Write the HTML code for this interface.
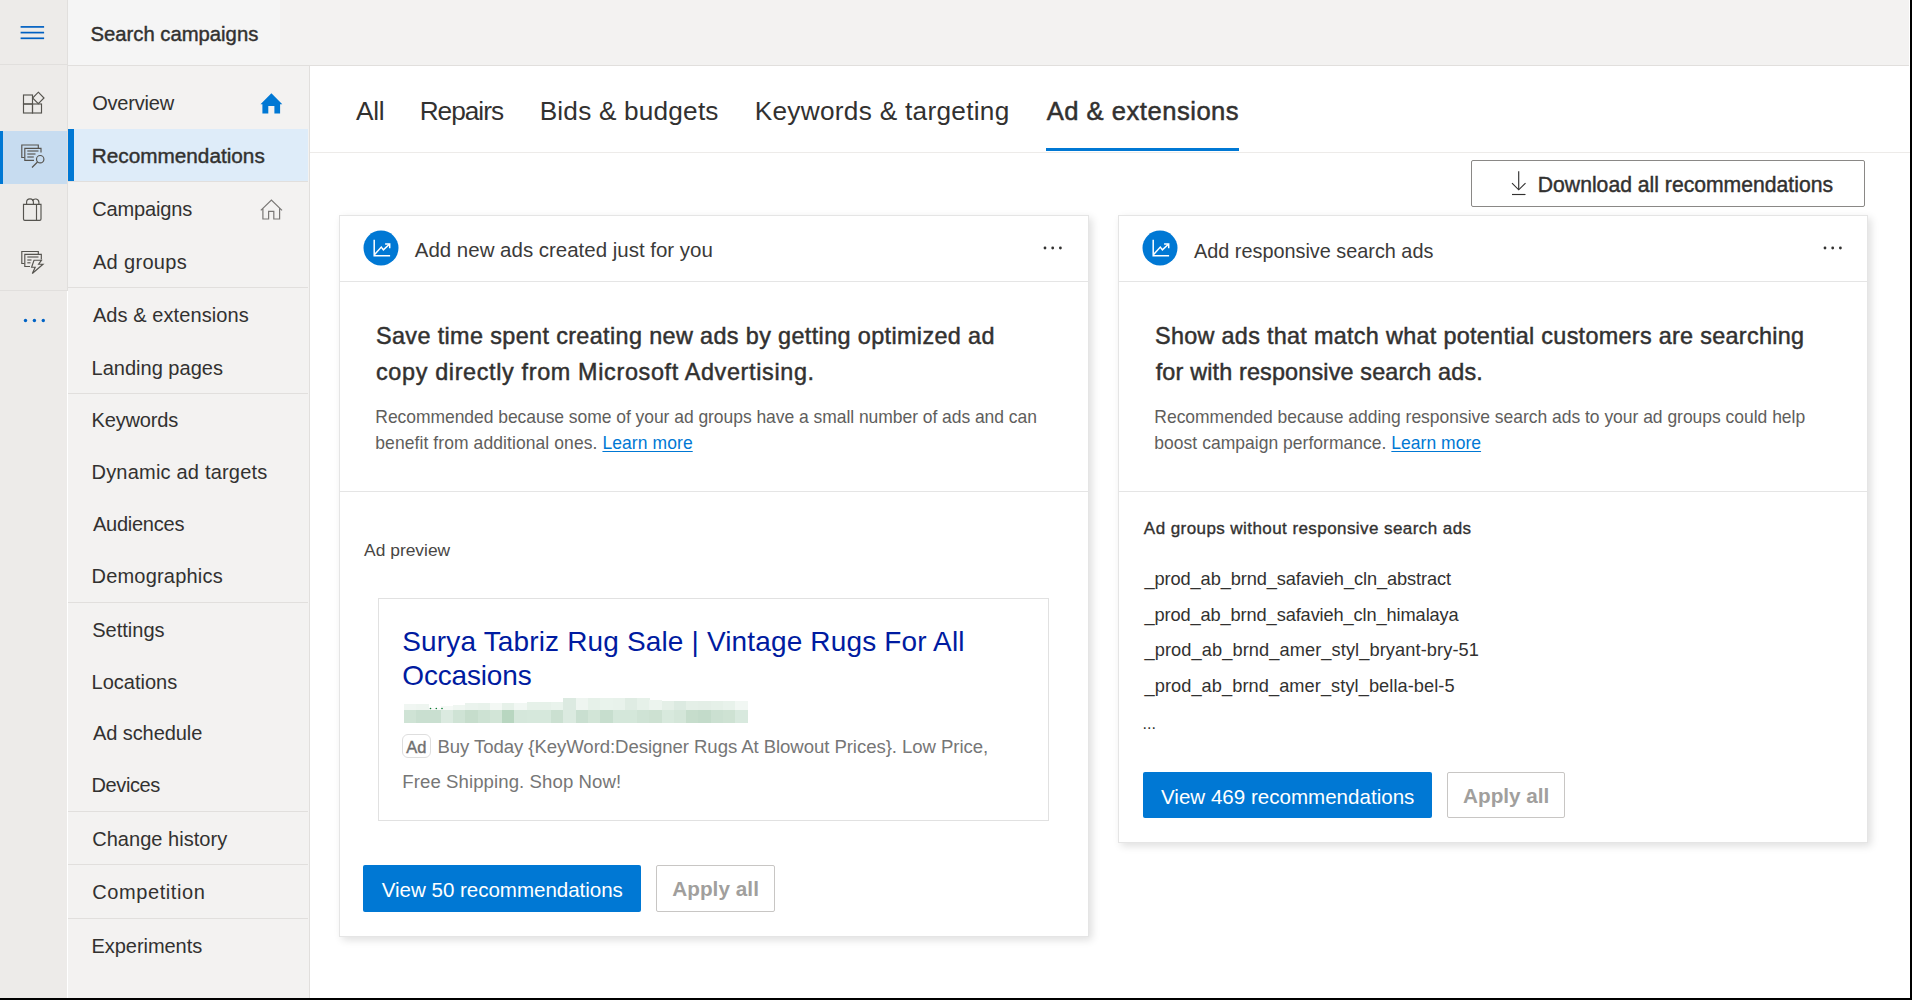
<!DOCTYPE html>
<html><head><meta charset="utf-8"><title>Search campaigns - Recommendations</title>
<style>
html,body{margin:0;padding:0;width:1912px;height:1000px;overflow:hidden;background:#fff;font-family:"Liberation Sans",sans-serif;}
.t{position:absolute;white-space:pre;}
</style></head><body>
<div style="position:absolute;left:0px;top:0px;width:67px;height:1000px;background:#edebe9;"></div>
<div style="position:absolute;left:67px;top:0px;width:1px;height:291px;background:#e1dfdd;"></div>
<div style="position:absolute;left:0px;top:64px;width:67px;height:1px;background:#e1dfdd;"></div>
<div style="position:absolute;left:0px;top:290px;width:67px;height:1px;background:#e1dfdd;"></div>
<div style="position:absolute;left:0px;top:131px;width:67px;height:53px;background:#c7dcf0;"></div>
<div style="position:absolute;left:0px;top:131px;width:3px;height:53px;background:#0078d4;"></div>
<svg style="position:absolute;left:0;top:0" width="68" height="340" viewBox="0 0 68 340">
<g fill="none" stroke="#0060c2" stroke-width="1.7">
<line x1="20.6" y1="26.9" x2="44.1" y2="26.9"/><line x1="20.6" y1="32.6" x2="44.1" y2="32.6"/><line x1="20.6" y1="38.3" x2="44.1" y2="38.3"/>
</g>
<g fill="none" stroke="#56544f" stroke-width="1.15">
<rect x="23.5" y="95" width="9" height="9"/>
<rect x="23.5" y="104" width="9" height="9"/>
<rect x="32.5" y="104" width="9" height="9"/>
<path d="M38.3 92.2 L44 98 L38.3 103.7 L32.6 98 Z"/>
</g>
<g fill="none" stroke="#56544f" stroke-width="1.15">
<path d="M24.5 157.5 L21.8 157.5 L21.8 145 L38.3 145 L38.3 148.3"/>
<path d="M34 160.3 L24.8 160.3 L24.8 148.3 L41 148.3 L41 152.5"/>
<line x1="27.3" y1="151" x2="38.5" y2="151"/>
<line x1="27.3" y1="154" x2="35.5" y2="154"/>
<line x1="27.3" y1="157" x2="33.8" y2="157"/>
<circle cx="40.2" cy="159.2" r="3.7"/>
<line x1="37.5" y1="162" x2="32" y2="167.5"/>
</g>
<g fill="none" stroke="#56544f" stroke-width="1.15">
<path d="M23.5 204.3 L41 204.3 L41 219 Q41 220.3 39.7 220.3 L24.8 220.3 Q23.5 220.3 23.5 219 Z"/>
<line x1="36.5" y1="204.3" x2="36.5" y2="220.3"/>
<path d="M26.6 204.3 L26.6 202.3 A3.4 3.4 0 0 1 33.4 202.3 L33.4 204.3"/>
<path d="M32.4 201 A3.4 3.4 0 0 1 38.9 202.3 L38.9 204.3"/>
</g>
<g fill="none" stroke="#56544f" stroke-width="1.15">
<path d="M24.5 263.5 L21.8 263.5 L21.8 251.5 L38.3 251.5 L38.3 254.3"/>
<path d="M30 266.5 L24.8 266.5 L24.8 254.3 L41.3 254.3 L41.3 259.5"/>
<line x1="27.3" y1="257" x2="38.5" y2="257"/>
<line x1="27.3" y1="260" x2="31.5" y2="260"/>
<line x1="27.3" y1="262.8" x2="30.5" y2="262.8"/>
<path d="M34 260.2 L41.5 260.2 L38.6 264.2 L43 264.2 L32.3 273.5 L35.2 267.2 L31.6 267.2 Z"/>
</g>
<g fill="#0063c5"><circle cx="25.5" cy="320.5" r="1.7"/><circle cx="34.4" cy="320.5" r="1.7"/><circle cx="43.3" cy="320.5" r="1.7"/></g>
</svg>
<div style="position:absolute;left:68px;top:0px;width:1841px;height:65px;background:#f3f2f1;"></div>
<div style="position:absolute;left:68px;top:0px;width:212px;height:65px;background:#f5f5f5;"></div>
<div style="position:absolute;left:68px;top:65px;width:1841px;height:1px;background:#e1dfdd;"></div>
<div style="position:absolute;left:68px;top:66px;width:241px;height:934px;background:#f3f2f1;"></div>
<div style="position:absolute;left:309px;top:66px;width:1px;height:934px;background:#e1dfdd;"></div>
<div style="position:absolute;left:68px;top:129px;width:240px;height:52px;background:#deecf9;"></div>
<div style="position:absolute;left:68px;top:129px;width:6px;height:52px;background:#0078d4;"></div>
<div style="position:absolute;left:68px;top:181px;width:240px;height:1px;background:#e1dfdd;"></div>
<div style="position:absolute;left:68px;top:287px;width:240px;height:1px;background:#e1dfdd;"></div>
<div style="position:absolute;left:68px;top:393px;width:240px;height:1px;background:#e1dfdd;"></div>
<div style="position:absolute;left:68px;top:602px;width:240px;height:1px;background:#e1dfdd;"></div>
<div style="position:absolute;left:68px;top:811px;width:240px;height:1px;background:#e1dfdd;"></div>
<div style="position:absolute;left:68px;top:864px;width:240px;height:1px;background:#e1dfdd;"></div>
<div style="position:absolute;left:68px;top:918px;width:240px;height:1px;background:#e1dfdd;"></div>
<svg style="position:absolute;left:255px;top:88px" width="32" height="135" viewBox="255 88 32 135">
<path fill="#0078d4" d="M271.4 93.2 L282.3 104.3 L280.1 104.3 L280.1 113.5 L274.4 113.5 L274.4 105.9 L268.3 105.9 L268.3 113.5 L262.4 113.5 L262.4 104.3 L260.5 104.3 Z"/>
<path fill="none" stroke="#797775" stroke-width="1.2" d="M260.8 210.4 L271.4 200 L282 210.4 M262.9 208.6 L262.9 219 L268.6 219 L268.6 211.4 L273.8 211.4 L273.8 219 L279.6 219 L279.6 208.6"/>
</svg>
<div style="position:absolute;left:310px;top:66px;width:1600px;height:932px;background:#fff;"></div>
<div style="position:absolute;left:310px;top:152px;width:1600px;height:1px;background:#edebe9;"></div>
<div style="position:absolute;left:1046px;top:148px;width:193px;height:3px;background:#0078d4;"></div>
<div style="position:absolute;left:1471px;top:160px;width:392px;height:45px;border:1px solid #8a8886;border-radius:2px;background:#fff"></div>
<svg style="position:absolute;left:1508px;top:168px" width="22" height="30" viewBox="1508 168 22 30">
<g fill="none" stroke="#323130" stroke-width="1.15"><line x1="1518.7" y1="171.3" x2="1518.7" y2="189.5"/><path d="M1512 183.2 L1518.7 189.8 L1525.5 183.2"/><line x1="1512" y1="194.5" x2="1525.5" y2="194.5"/></g></svg>
<div style="position:absolute;left:339px;top:215px;width:750px;height:722px;background:#fff;border:1px solid #e5e5e5;box-sizing:border-box;box-shadow:3px 3px 8px rgba(0,0,0,0.13)"></div>
<div style="position:absolute;left:340px;top:281px;width:748px;height:1px;background:#e5e5e5;"></div>
<div style="position:absolute;left:340px;top:491px;width:748px;height:1px;background:#e5e5e5;"></div>
<svg style="position:absolute;left:363px;top:230.2px" width="36" height="36" viewBox="-18 -18 36 36">
<circle cx="0" cy="0" r="17.5" fill="#0078d4"/>
<g fill="none" stroke="#fff" stroke-width="1.5"><path d="M-6.8 -8.3 L-6.8 7.7 L9.1 7.7"/><path d="M-6.4 6.6 L0.3 -0.9 L2.4 1.9 L8.4 -3.8"/><path d="M4.1 -3.9 L8.7 -3.9 L8.7 0.2"/></g></svg>
<svg style="position:absolute;left:1041.2px;top:244.4px" width="24" height="8" viewBox="1041.2 244.4 24 8"><g fill="#323130"><circle cx="1045.2" cy="248.4" r="1.4"/><circle cx="1052.9" cy="248.4" r="1.4"/><circle cx="1060.6000000000001" cy="248.4" r="1.4"/></g></svg>
<div style="position:absolute;left:378px;top:598px;width:671px;height:223px;border:1px solid #e1e1e1;box-sizing:border-box"></div>
<div style="position:absolute;left:404.00px;top:710.4px;width:12.57px;height:12.2px;background:#cfe3d5"></div><div style="position:absolute;left:404.00px;top:703.5px;width:12.57px;height:6.90px;background:#f0f6f2"></div><div style="position:absolute;left:416.27px;top:710.4px;width:12.57px;height:12.2px;background:#c9dfd0"></div><div style="position:absolute;left:416.27px;top:704px;width:12.57px;height:6.40px;background:#eef5f0"></div><div style="position:absolute;left:428.54px;top:710.4px;width:12.57px;height:12.2px;background:#c9dfd0"></div><div style="position:absolute;left:428.54px;top:708px;width:12.57px;height:2.40px;background:#f7faf8"></div><div style="position:absolute;left:440.80px;top:710.4px;width:12.57px;height:12.2px;background:#dbeae0"></div><div style="position:absolute;left:440.80px;top:706px;width:12.57px;height:4.40px;background:#f5f9f6"></div><div style="position:absolute;left:453.07px;top:710.4px;width:12.57px;height:12.2px;background:#cfe3d5"></div><div style="position:absolute;left:453.07px;top:705px;width:12.57px;height:5.40px;background:#eff6f1"></div><div style="position:absolute;left:465.34px;top:710.4px;width:12.57px;height:12.2px;background:#c6ddcc"></div><div style="position:absolute;left:465.34px;top:703px;width:12.57px;height:7.40px;background:#eaf3ed"></div><div style="position:absolute;left:477.61px;top:710.4px;width:12.57px;height:12.2px;background:#cde2d3"></div><div style="position:absolute;left:477.61px;top:703px;width:12.57px;height:7.40px;background:#e8f2eb"></div><div style="position:absolute;left:489.88px;top:710.4px;width:12.57px;height:12.2px;background:#d2e5d7"></div><div style="position:absolute;left:489.88px;top:703px;width:12.57px;height:7.40px;background:#f3f8f4"></div><div style="position:absolute;left:502.14px;top:710.4px;width:12.57px;height:12.2px;background:#b8d6c0"></div><div style="position:absolute;left:502.14px;top:703px;width:12.57px;height:7.40px;background:#e6f1e9"></div><div style="position:absolute;left:514.41px;top:710.4px;width:12.57px;height:12.2px;background:#d5e7db"></div><div style="position:absolute;left:514.41px;top:703px;width:12.57px;height:7.40px;background:#f1f7f3"></div><div style="position:absolute;left:526.68px;top:710.4px;width:12.57px;height:12.2px;background:#d6e8dc"></div><div style="position:absolute;left:526.68px;top:702px;width:12.57px;height:8.40px;background:#e6f1e9"></div><div style="position:absolute;left:538.95px;top:710.4px;width:12.57px;height:12.2px;background:#d6e8dc"></div><div style="position:absolute;left:538.95px;top:702px;width:12.57px;height:8.40px;background:#e6f1e9"></div><div style="position:absolute;left:551.21px;top:710.4px;width:12.57px;height:12.2px;background:#cbe0d1"></div><div style="position:absolute;left:551.21px;top:702px;width:12.57px;height:8.40px;background:#e9f3ec"></div><div style="position:absolute;left:563.48px;top:710.4px;width:12.57px;height:12.2px;background:#dbeae0"></div><div style="position:absolute;left:563.48px;top:698px;width:12.57px;height:12.40px;background:#dceae1"></div><div style="position:absolute;left:575.75px;top:710.4px;width:12.57px;height:12.2px;background:#c9dfd0"></div><div style="position:absolute;left:575.75px;top:698px;width:12.57px;height:12.40px;background:#eef5f0"></div><div style="position:absolute;left:588.02px;top:710.4px;width:12.57px;height:12.2px;background:#d2e5d7"></div><div style="position:absolute;left:588.02px;top:698px;width:12.57px;height:12.40px;background:#e6f1e9"></div><div style="position:absolute;left:600.29px;top:710.4px;width:12.57px;height:12.2px;background:#c7dece"></div><div style="position:absolute;left:600.29px;top:698px;width:12.57px;height:12.40px;background:#e9f3ec"></div><div style="position:absolute;left:612.55px;top:710.4px;width:12.57px;height:12.2px;background:#d4e7da"></div><div style="position:absolute;left:612.55px;top:698px;width:12.57px;height:12.40px;background:#e8f2eb"></div><div style="position:absolute;left:624.82px;top:710.4px;width:12.57px;height:12.2px;background:#d4e7da"></div><div style="position:absolute;left:624.82px;top:698px;width:12.57px;height:12.40px;background:#dfece3"></div><div style="position:absolute;left:637.09px;top:710.4px;width:12.57px;height:12.2px;background:#cfe3d5"></div><div style="position:absolute;left:637.09px;top:698px;width:12.57px;height:12.40px;background:#e6f1e9"></div><div style="position:absolute;left:649.36px;top:710.4px;width:12.57px;height:12.2px;background:#cde1d2"></div><div style="position:absolute;left:649.36px;top:700px;width:12.57px;height:10.40px;background:#ecf4ee"></div><div style="position:absolute;left:661.62px;top:710.4px;width:12.57px;height:12.2px;background:#d8e9dd"></div><div style="position:absolute;left:661.62px;top:701px;width:12.57px;height:9.40px;background:#e4efe7"></div><div style="position:absolute;left:673.89px;top:710.4px;width:12.57px;height:12.2px;background:#d4e6d9"></div><div style="position:absolute;left:673.89px;top:700.8px;width:12.57px;height:9.60px;background:#dceae1"></div><div style="position:absolute;left:686.16px;top:710.4px;width:12.57px;height:12.2px;background:#c6ddcc"></div><div style="position:absolute;left:686.16px;top:700.8px;width:12.57px;height:9.60px;background:#e4efe7"></div><div style="position:absolute;left:698.43px;top:710.4px;width:12.57px;height:12.2px;background:#c3dbca"></div><div style="position:absolute;left:698.43px;top:700.8px;width:12.57px;height:9.60px;background:#e3eee6"></div><div style="position:absolute;left:710.70px;top:710.4px;width:12.57px;height:12.2px;background:#cbe0d1"></div><div style="position:absolute;left:710.70px;top:700.8px;width:12.57px;height:9.60px;background:#e5f0e8"></div><div style="position:absolute;left:722.96px;top:710.4px;width:12.57px;height:12.2px;background:#cee2d3"></div><div style="position:absolute;left:722.96px;top:700.8px;width:12.57px;height:9.60px;background:#e8f2eb"></div><div style="position:absolute;left:735.23px;top:710.4px;width:12.57px;height:12.2px;background:#d8e9de"></div><div style="position:absolute;left:735.23px;top:701px;width:12.57px;height:9.40px;background:#f1f7f3"></div>
<svg style="position:absolute;left:428px;top:706px" width="16" height="5" viewBox="428 706 16 5"><g fill="#0b7a32"><circle cx="430.5" cy="708.5" r="0.8"/><circle cx="436.3" cy="708.5" r="0.8"/><circle cx="442" cy="708.5" r="0.8"/></g></svg>
<div style="position:absolute;left:402px;top:734px;width:29px;height:24px;border:1px solid #dedede;border-radius:6px;box-sizing:border-box"></div>
<div style="position:absolute;left:406.3px;top:737.9px;font-size:16.5px;line-height:18.4px;color:#707070;-webkit-text-stroke:0.4px #707070;white-space:pre">Ad</div>
<div style="position:absolute;left:363px;top:865px;width:278px;height:47px;background:#0078d4;border-radius:2px"></div>
<div style="position:absolute;left:656px;top:865px;width:119px;height:47px;border:1px solid #c8c6c4;border-radius:2px;box-sizing:border-box"></div>
<div style="position:absolute;left:1118px;top:215px;width:750px;height:628px;background:#fff;border:1px solid #e5e5e5;box-sizing:border-box;box-shadow:3px 3px 8px rgba(0,0,0,0.13)"></div>
<div style="position:absolute;left:1119px;top:281px;width:748px;height:1px;background:#e5e5e5;"></div>
<div style="position:absolute;left:1119px;top:491px;width:748px;height:1px;background:#e5e5e5;"></div>
<svg style="position:absolute;left:1142.4px;top:230.2px" width="36" height="36" viewBox="-18 -18 36 36">
<circle cx="0" cy="0" r="17.5" fill="#0078d4"/>
<g fill="none" stroke="#fff" stroke-width="1.5"><path d="M-6.8 -8.3 L-6.8 7.7 L9.1 7.7"/><path d="M-6.4 6.6 L0.3 -0.9 L2.4 1.9 L8.4 -3.8"/><path d="M4.1 -3.9 L8.7 -3.9 L8.7 0.2"/></g></svg>
<svg style="position:absolute;left:1820.6px;top:244.4px" width="24" height="8" viewBox="1820.6 244.4 24 8"><g fill="#323130"><circle cx="1824.6" cy="248.4" r="1.4"/><circle cx="1832.3" cy="248.4" r="1.4"/><circle cx="1840.0" cy="248.4" r="1.4"/></g></svg>
<div style="position:absolute;left:1143px;top:772px;width:289px;height:46px;background:#0078d4;border-radius:2px"></div>
<div style="position:absolute;left:1447px;top:772px;width:118px;height:46px;border:1px solid #c8c6c4;border-radius:2px;box-sizing:border-box"></div>
<div class="t" id="hdr" style="left:90.46px;top:22.75px;font-size:20.27px;line-height:22.65px;font-weight:400;color:#323130;letter-spacing:0.000px;-webkit-text-stroke:0.405px #323130;">Search campaigns</div>
<div class="t" id="n1" style="left:92.21px;top:92.26px;font-size:20.05px;line-height:22.39px;font-weight:400;color:#323130;letter-spacing:-0.227px;">Overview</div>
<div class="t" id="n2" style="left:91.76px;top:144.43px;font-size:20.75px;line-height:23.17px;font-weight:400;color:#323130;letter-spacing:0.000px;-webkit-text-stroke:0.415px #323130;">Recommendations</div>
<div class="t" id="n3" style="left:92.21px;top:198.36px;font-size:20.05px;line-height:22.39px;font-weight:400;color:#323130;letter-spacing:-0.153px;">Campaigns</div>
<div class="t" id="n4" style="left:92.91px;top:251.16px;font-size:20.05px;line-height:22.39px;font-weight:400;color:#323130;letter-spacing:0.325px;">Ad groups</div>
<div class="t" id="n5" style="left:92.91px;top:304.16px;font-size:20.05px;line-height:22.39px;font-weight:400;color:#323130;letter-spacing:0.067px;">Ads &amp; extensions</div>
<div class="t" id="n6" style="left:91.51px;top:356.96px;font-size:20.05px;line-height:22.39px;font-weight:400;color:#323130;letter-spacing:0.000px;">Landing pages</div>
<div class="t" id="n7" style="left:91.51px;top:409.46px;font-size:20.05px;line-height:22.39px;font-weight:400;color:#323130;letter-spacing:-0.171px;">Keywords</div>
<div class="t" id="n8" style="left:91.51px;top:460.96px;font-size:20.05px;line-height:22.39px;font-weight:400;color:#323130;letter-spacing:0.189px;">Dynamic ad targets</div>
<div class="t" id="n9" style="left:92.91px;top:513.46px;font-size:20.05px;line-height:22.39px;font-weight:400;color:#323130;letter-spacing:-0.253px;">Audiences</div>
<div class="t" id="n10" style="left:91.51px;top:565.46px;font-size:20.05px;line-height:22.39px;font-weight:400;color:#323130;letter-spacing:0.182px;">Demographics</div>
<div class="t" id="n11" style="left:92.21px;top:618.76px;font-size:20.05px;line-height:22.39px;font-weight:400;color:#323130;letter-spacing:-0.001px;">Settings</div>
<div class="t" id="n12" style="left:91.51px;top:671.06px;font-size:20.05px;line-height:22.39px;font-weight:400;color:#323130;letter-spacing:-0.003px;">Locations</div>
<div class="t" id="n13" style="left:92.91px;top:722.26px;font-size:20.05px;line-height:22.39px;font-weight:400;color:#323130;letter-spacing:-0.080px;">Ad schedule</div>
<div class="t" id="n14" style="left:91.51px;top:774.26px;font-size:20.05px;line-height:22.39px;font-weight:400;color:#323130;letter-spacing:-0.399px;">Devices</div>
<div class="t" id="n15" style="left:92.21px;top:827.86px;font-size:20.05px;line-height:22.39px;font-weight:400;color:#323130;letter-spacing:0.016px;">Change history</div>
<div class="t" id="n16" style="left:92.21px;top:880.86px;font-size:20.05px;line-height:22.39px;font-weight:400;color:#323130;letter-spacing:0.580px;">Competition</div>
<div class="t" id="n17" style="left:91.51px;top:934.86px;font-size:20.05px;line-height:22.39px;font-weight:400;color:#323130;letter-spacing:-0.060px;">Experiments</div>
<div class="t" id="tab1" style="left:355.91px;top:96.76px;font-size:26.23px;line-height:29.30px;font-weight:400;color:#323130;letter-spacing:-0.200px;">All</div>
<div class="t" id="tab2" style="left:419.66px;top:96.76px;font-size:26.23px;line-height:29.30px;font-weight:400;color:#323130;letter-spacing:-1.000px;">Repairs</div>
<div class="t" id="tab3" style="left:539.69px;top:96.76px;font-size:26.23px;line-height:29.30px;font-weight:400;color:#323130;letter-spacing:0.186px;">Bids &amp; budgets</div>
<div class="t" id="tab4" style="left:754.69px;top:96.76px;font-size:26.23px;line-height:29.30px;font-weight:400;color:#323130;letter-spacing:0.283px;">Keywords &amp; targeting</div>
<div class="t" id="tab5" style="left:1046.70px;top:96.83px;font-size:25.60px;line-height:28.60px;font-weight:400;color:#323130;letter-spacing:0.500px;-webkit-text-stroke:0.512px #323130;">Ad &amp; extensions</div>
<div class="t" id="dl" style="left:1537.84px;top:173.35px;font-size:21.16px;line-height:23.64px;font-weight:400;color:#323130;letter-spacing:0.000px;-webkit-text-stroke:0.423px #323130;">Download all recommendations</div>
<div class="t" id="c1t" style="left:414.77px;top:239.17px;font-size:20.48px;line-height:22.87px;font-weight:400;color:#3b3a39;letter-spacing:0.000px;">Add new ads created just for you</div>
<div class="t" id="c2t" style="left:1194.00px;top:240.34px;font-size:19.85px;line-height:22.17px;font-weight:400;color:#3b3a39;letter-spacing:0.000px;">Add responsive search ads</div>
<div class="t" id="h1a" style="left:376.00px;top:323.42px;font-size:23.40px;line-height:26.14px;font-weight:400;color:#323130;letter-spacing:0.370px;-webkit-text-stroke:0.468px #323130;">Save time spent creating new ads by getting optimized ad</div>
<div class="t" id="h1b" style="left:376.00px;top:358.62px;font-size:23.40px;line-height:26.14px;font-weight:400;color:#323130;letter-spacing:0.650px;-webkit-text-stroke:0.468px #323130;">copy directly from Microsoft Advertising.</div>
<div class="t" id="b1a" style="left:375.30px;top:407.57px;font-size:17.49px;line-height:19.54px;font-weight:400;color:#605e5c;letter-spacing:-0.042px;">Recommended because some of your ad groups have a small number of ads and can</div>
<div class="t" id="b1b" style="left:375.30px;top:433.97px;font-size:17.49px;line-height:19.54px;font-weight:400;color:#605e5c;letter-spacing:0.087px;">benefit from additional ones. <span style="color:#0078d4;text-decoration:underline;text-underline-offset:2px">Learn more</span></div>
<div class="t" id="h2a" style="left:1155.03px;top:323.42px;font-size:23.40px;line-height:26.14px;font-weight:400;color:#323130;letter-spacing:0.301px;-webkit-text-stroke:0.468px #323130;">Show ads that match what potential customers are searching</div>
<div class="t" id="h2b" style="left:1155.73px;top:359.02px;font-size:23.40px;line-height:26.14px;font-weight:400;color:#323130;letter-spacing:0.154px;-webkit-text-stroke:0.468px #323130;">for with responsive search ads.</div>
<div class="t" id="b2a" style="left:1154.33px;top:407.67px;font-size:17.49px;line-height:19.54px;font-weight:400;color:#605e5c;letter-spacing:-0.018px;">Recommended because adding responsive search ads to your ad groups could help</div>
<div class="t" id="b2b" style="left:1154.33px;top:433.97px;font-size:17.49px;line-height:19.54px;font-weight:400;color:#605e5c;letter-spacing:0.030px;">boost campaign performance. <span style="color:#0078d4;text-decoration:underline;text-underline-offset:2px">Learn more</span></div>
<div class="t" id="adp" style="left:364.08px;top:540.83px;font-size:17.42px;line-height:19.46px;font-weight:400;color:#484644;letter-spacing:0.000px;">Ad preview</div>
<div class="t" id="at1" style="left:402.30px;top:625.98px;font-size:27.98px;line-height:31.25px;font-weight:400;color:#001ba0;letter-spacing:0.168px;">Surya Tabriz Rug Sale | Vintage Rugs For All</div>
<div class="t" id="at2" style="left:402.30px;top:660.28px;font-size:27.98px;line-height:31.25px;font-weight:400;color:#001ba0;letter-spacing:-0.153px;">Occasions</div>
<div class="t" id="ad1" style="left:437.39px;top:736.79px;font-size:18.58px;line-height:20.75px;font-weight:400;color:#767676;letter-spacing:-0.067px;">Buy Today {KeyWord:Designer Rugs At Blowout Prices}. Low Price,</div>
<div class="t" id="ad2" style="left:402.30px;top:772.19px;font-size:18.58px;line-height:20.75px;font-weight:400;color:#767676;letter-spacing:0.087px;">Free Shipping. Shop Now!</div>
<div class="t" id="v50" style="left:381.79px;top:877.78px;font-size:20.57px;line-height:22.98px;font-weight:400;color:#ffffff;letter-spacing:-0.038px;">View 50 recommendations</div>
<div class="t" id="ap1" style="left:672.21px;top:877.35px;font-size:20.72px;line-height:23.14px;font-weight:700;color:#a19f9d;letter-spacing:0.047px;">Apply all</div>
<div class="t" id="agh" style="left:1143.86px;top:519.21px;font-size:17.00px;line-height:18.99px;font-weight:400;color:#323130;letter-spacing:0.429px;-webkit-text-stroke:0.34px #323130;">Ad groups without responsive search ads</div>
<div class="t" id="g1" style="left:1144.49px;top:568.90px;font-size:18.23px;line-height:20.36px;font-weight:400;color:#323130;letter-spacing:-0.099px;">_prod_ab_brnd_safavieh_cln_abstract</div>
<div class="t" id="g2" style="left:1144.49px;top:604.80px;font-size:18.23px;line-height:20.36px;font-weight:400;color:#323130;letter-spacing:-0.112px;">_prod_ab_brnd_safavieh_cln_himalaya</div>
<div class="t" id="g3" style="left:1144.49px;top:640.10px;font-size:18.23px;line-height:20.36px;font-weight:400;color:#323130;letter-spacing:0.090px;">_prod_ab_brnd_amer_styl_bryant-bry-51</div>
<div class="t" id="g4" style="left:1144.49px;top:676.00px;font-size:18.23px;line-height:20.36px;font-weight:400;color:#323130;letter-spacing:0.066px;">_prod_ab_brnd_amer_styl_bella-bel-5</div>
<div class="t" id="g5" style="left:1142.53px;top:715.28px;font-size:16.04px;line-height:17.92px;font-weight:400;color:#323130;letter-spacing:0.000px;">...</div>
<div class="t" id="v469" style="left:1161.00px;top:785.38px;font-size:20.57px;line-height:22.98px;font-weight:400;color:#ffffff;letter-spacing:0.000px;">View 469 recommendations</div>
<div class="t" id="ap2" style="left:1463.09px;top:784.15px;font-size:20.72px;line-height:23.14px;font-weight:700;color:#a19f9d;letter-spacing:-0.028px;">Apply all</div>
<div style="position:absolute;left:1910px;top:0px;width:2px;height:1000px;background:#000;"></div>
<div style="position:absolute;left:0px;top:998px;width:1912px;height:2px;background:#000;"></div>
</body></html>
